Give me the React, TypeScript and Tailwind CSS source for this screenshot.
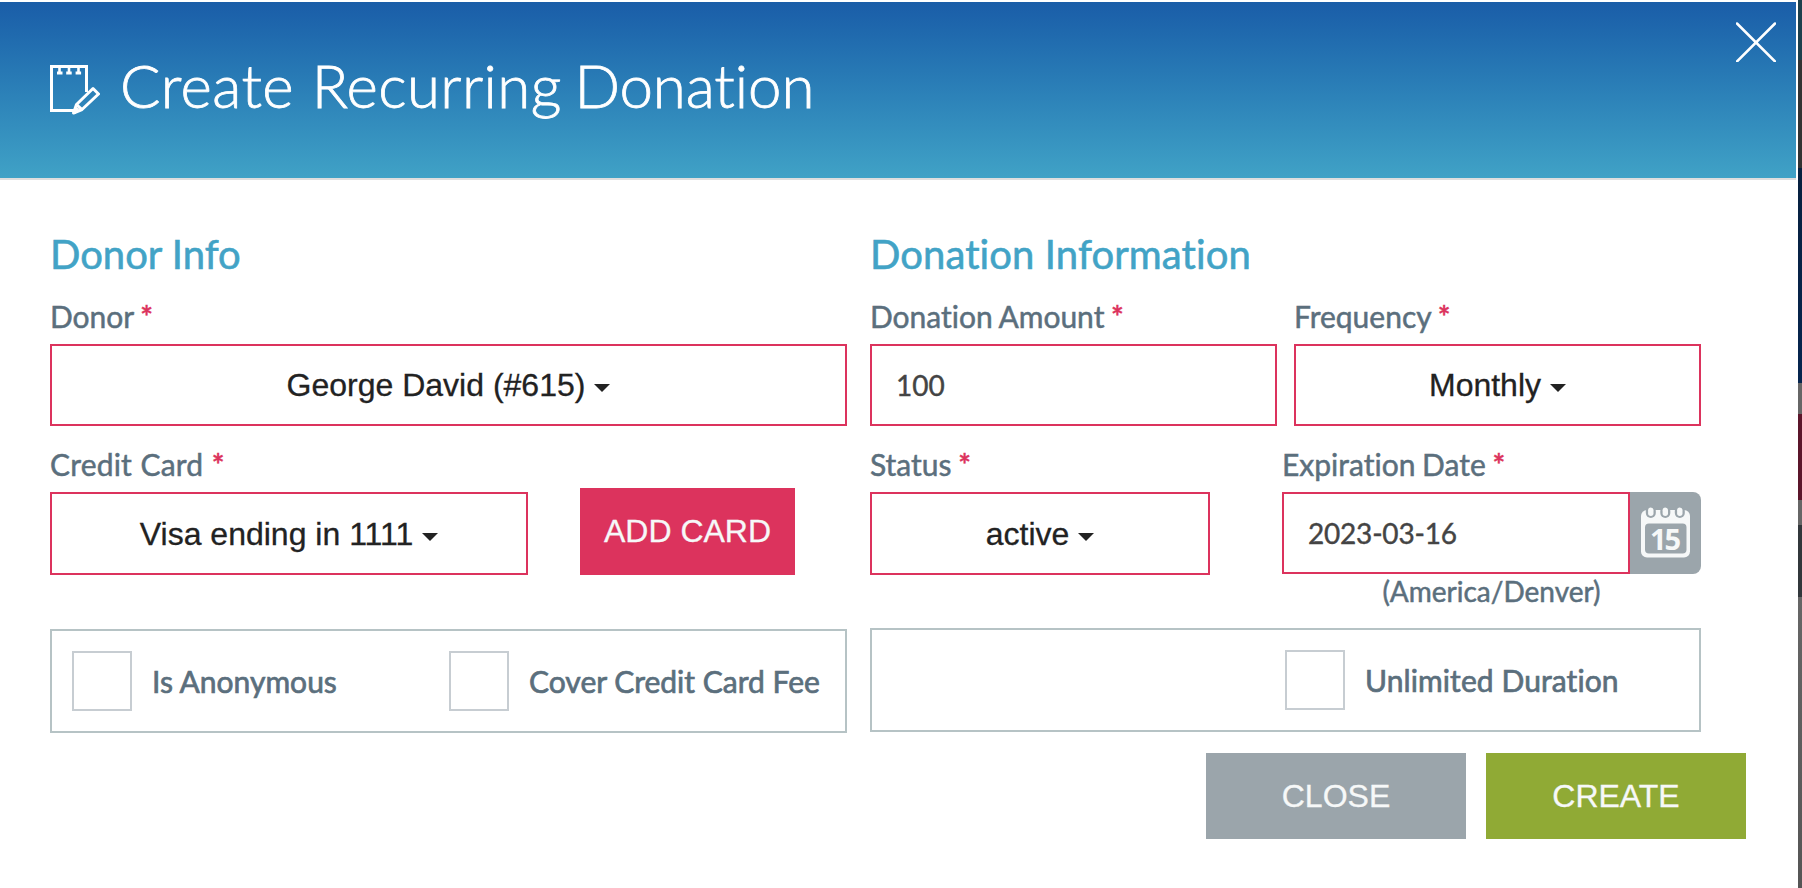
import * as React from "react"
import { clsx } from "clsx"

interface FieldLabelProps {
  className?: string
  children: React.ReactNode
}

// Label row above a control, with the red required marker
function FieldLabel({ className = "[word-spacing:-1px]", children }: FieldLabelProps) {
  return (
    <label
      className={clsx(
        "mb-2.5 block h-9 whitespace-nowrap text-[30px] leading-9 text-[#5b6f7d] [-webkit-text-stroke:0.5px]",
        className
      )}
    >
      {children} <span className="font-bold text-[#dc335d] [-webkit-text-stroke:0.3px]">*</span>
    </label>
  )
}

interface SelectButtonProps {
  value: string
  className?: string
}

function SelectButton({ value, className }: SelectButtonProps) {
  return (
    <button
      type="button"
      className={clsx(
        "flex items-center justify-center gap-[9px] border-2 border-[#dc335d] bg-white font-['Liberation_Sans',Arial,sans-serif] text-[32px] leading-9 text-[#222] [-webkit-text-stroke:0.3px]",
        className
      )}
    >
      <span>{value}</span>
      <svg className="mt-1.5 h-2 w-4" viewBox="0 0 16 8" fill="currentColor">
        <path d="M0 0h16L8 8z" />
      </svg>
    </button>
  )
}

interface CheckboxProps {
  label: string
  className?: string
}

function Checkbox({ label, className }: CheckboxProps) {
  return (
    <label
      className={clsx(
        "flex items-center whitespace-nowrap text-[30px] leading-9 text-[#5b6f7d] [-webkit-text-stroke:0.7px]",
        className
      )}
    >
      <span className="mr-5 size-[60px] shrink-0 border-2 border-[#c7cdd2] bg-white" />
      <span>{label}</span>
    </label>
  )
}

function NotepadIcon() {
  return (
    <svg className="h-[50px] w-[50px] shrink-0" viewBox="0 0 50 50" fill="none" stroke="white">
      <path d="M36.5 27V1.500h-35v44H24" strokeWidth="3" />
      <path d="M9.500 2v6M19 2v6M28.500 2v6" strokeWidth="2.600" />
      <path d="M7 8h5.500M16.200 8h5.500M25.600 8h5.500" strokeWidth="3" />
      <path d="M23.500 48l3-8.500L43 23.500l5.500 5.500L32 44.500z" strokeWidth="3" strokeLinejoin="round" />
      <path d="M26.500 39.500l5.500 5M24 48l4-5" strokeWidth="3" />
    </svg>
  )
}

function CalendarIcon() {
  return (
    <svg className="h-[52px] w-[50px]" viewBox="0 0 50 52">
      <rect y="3" width="49" height="47.500" rx="6" fill="#f6f8f8" />
      <rect x="4" y="16.500" width="41.500" height="30" rx="4" fill="#9ba5ab" />
      {[9.8, 24.3, 38.8].map((x) => (
        <g key={x}>
          <rect x={x - 5} y="-1" width="10" height="12" rx="5" fill="#9ba5ab" />
          <rect x={x - 2.7} y="0.500" width="5.400" height="8.500" rx="2.700" fill="#f6f8f8" />
        </g>
      ))}
      <text
        x="23.500"
        y="42.500"
        textAnchor="middle"
        fontFamily="'Open Sans', sans-serif"
        fontWeight="700"
        fontSize="29"
        letterSpacing="-2"
        fill="#f6f8f8"
      >
        15
      </text>
    </svg>
  )
}

// Sliver of the dimmed page that stays visible beside the modal
function Backdrop() {
  return (
    <div className="flex w-1 shrink-0 flex-col">
      <div className="h-[60px] bg-[#1c404d]" />
      <div className="h-[108px] bg-[#333]" />
      <div className="h-[215px] bg-linear-to-b from-[#07203f] to-[#05254f]" />
      <div className="h-[31px] bg-[#666]" />
      <div className="h-[86px] bg-[#5b152a]" />
      <div className="h-[25px] bg-[#666]" />
      <div className="h-[72px] bg-[#31373b]" />
      <div className="flex-1 bg-linear-to-b from-[#666] to-[#555]" />
    </div>
  )
}

export default function App() {
  return (
    <div className="flex h-[888px] w-[1802px] overflow-hidden bg-white font-[Lato,sans-serif] [font-variant-ligatures:none]">
      <div className="flex min-w-0 flex-1 flex-col pt-0.5">
        <header className="mr-0.5 flex h-[178px] shrink-0 items-start justify-between border-b-2 border-[#dedede] bg-linear-to-b from-[#1a5da8] to-[#40a2c6] pl-[50px]">
          <div className="flex pt-[47px]">
            <div className="pt-4">
              <NotepadIcon />
            </div>
            <h1 className="ml-5 whitespace-nowrap text-[60px] font-light leading-[72px] tracking-[0.4px] text-white [-webkit-text-stroke:0.8px] [word-spacing:-4px]">
              <span className="mr-[5px]">Create</span> Recurring <span className="tracking-[-0.1px]">Donation</span>
            </h1>
          </div>
          <button type="button" aria-label="Close dialog" className="mr-5 mt-5">
            <svg className="size-10" viewBox="0 0 40 40" stroke="white" strokeWidth="2.500" strokeLinecap="round">
              <path d="M1 1.500l38 38M39 1.500L1 39.500" />
            </svg>
          </button>
        </header>

        <main className="flex gap-[23px] pl-[50px] pt-[50px]">
          <section className="w-[797px]">
            <h2 className="mb-5 text-[40px] leading-[48px] text-[#42a3c6] [-webkit-text-stroke:0.6px]">Donor Info</h2>
            <FieldLabel>Donor</FieldLabel>
            <SelectButton value="George David (#615)" className="h-[82px] w-full" />
            <div className="mt-5 flex items-end">
              <div className="w-[478px]">
                <FieldLabel className="tracking-[0.2px] [word-spacing:0.5px]">Credit Card</FieldLabel>
                <SelectButton value="Visa ending in 1111" className="h-[83px] w-full" />
              </div>
              <button
                type="button"
                className="ml-[52px] h-[87px] w-[215px] bg-[#dc335d] pb-0.5 font-['Liberation_Sans',Arial,sans-serif] text-[32px] text-[#f6f8f8] [-webkit-text-stroke:0.3px]"
              >
                ADD CARD
              </button>
            </div>
            <div className="mt-[54px] flex h-[104px] items-center border-2 border-[#b6c3c5] pl-5">
              <Checkbox label="Is Anonymous" className="w-[377px]" />
              <Checkbox label="Cover Credit Card Fee" />
            </div>
          </section>

          <section className="w-[831px]">
            <h2 className="mb-5 text-[40px] leading-[48px] tracking-[0.1px] text-[#42a3c6] [-webkit-text-stroke:0.6px]">
              Donation Information
            </h2>
            <div className="flex gap-[17px]">
              <div className="w-[407px]">
                <FieldLabel>Donation Amount</FieldLabel>
                <input
                  className="block h-[82px] w-full border-2 border-[#dc335d] bg-white px-6 text-[28px] text-[#444] [-webkit-text-stroke:0.4px]"
                  defaultValue="100"
                />
              </div>
              <div className="w-[407px]">
                <FieldLabel>Frequency</FieldLabel>
                <SelectButton value="Monthly" className="h-[82px] w-full" />
              </div>
            </div>
            <div className="mt-5 flex justify-between">
              <div className="w-[340px]">
                <FieldLabel>Status</FieldLabel>
                <SelectButton value="active" className="h-[83px] w-full" />
              </div>
              <div className="w-[419px]">
                <FieldLabel>Expiration Date</FieldLabel>
                <div className="flex h-[82px]">
                  <input
                    className="w-[348px] border-2 border-[#dc335d] bg-white px-6 text-[28px] tracking-[-0.2px] text-[#444] [-webkit-text-stroke:0.4px]"
                    defaultValue="2023-03-16"
                  />
                  <button
                    type="button"
                    aria-label="Pick a date"
                    className="flex flex-1 items-center justify-center rounded-r-lg bg-[#9ba5ab]"
                  >
                    <CalendarIcon />
                  </button>
                </div>
                <p className="h-[54px] text-center text-[28px] leading-[34px] text-[#5b6f7d] [-webkit-text-stroke:0.5px]">
                  (America/Denver)
                </p>
              </div>
            </div>
            <div className="flex h-[104px] items-center border-2 border-[#b6c3c5] pl-[413px]">
              <Checkbox label="Unlimited Duration" className="tracking-[0.1px]" />
            </div>
          </section>
        </main>

        <footer className="mt-5 flex justify-end gap-5 pr-[52px] font-['Liberation_Sans',Arial,sans-serif] text-[32px] text-[#f6f8f8] [-webkit-text-stroke:0.3px]">
          <button type="button" className="h-[86px] w-[260px] bg-[#9ba5ab]">
            CLOSE
          </button>
          <button type="button" className="h-[86px] w-[260px] bg-[#90aa35]">
            CREATE
          </button>
        </footer>
      </div>
      <Backdrop />
    </div>
  )
}
